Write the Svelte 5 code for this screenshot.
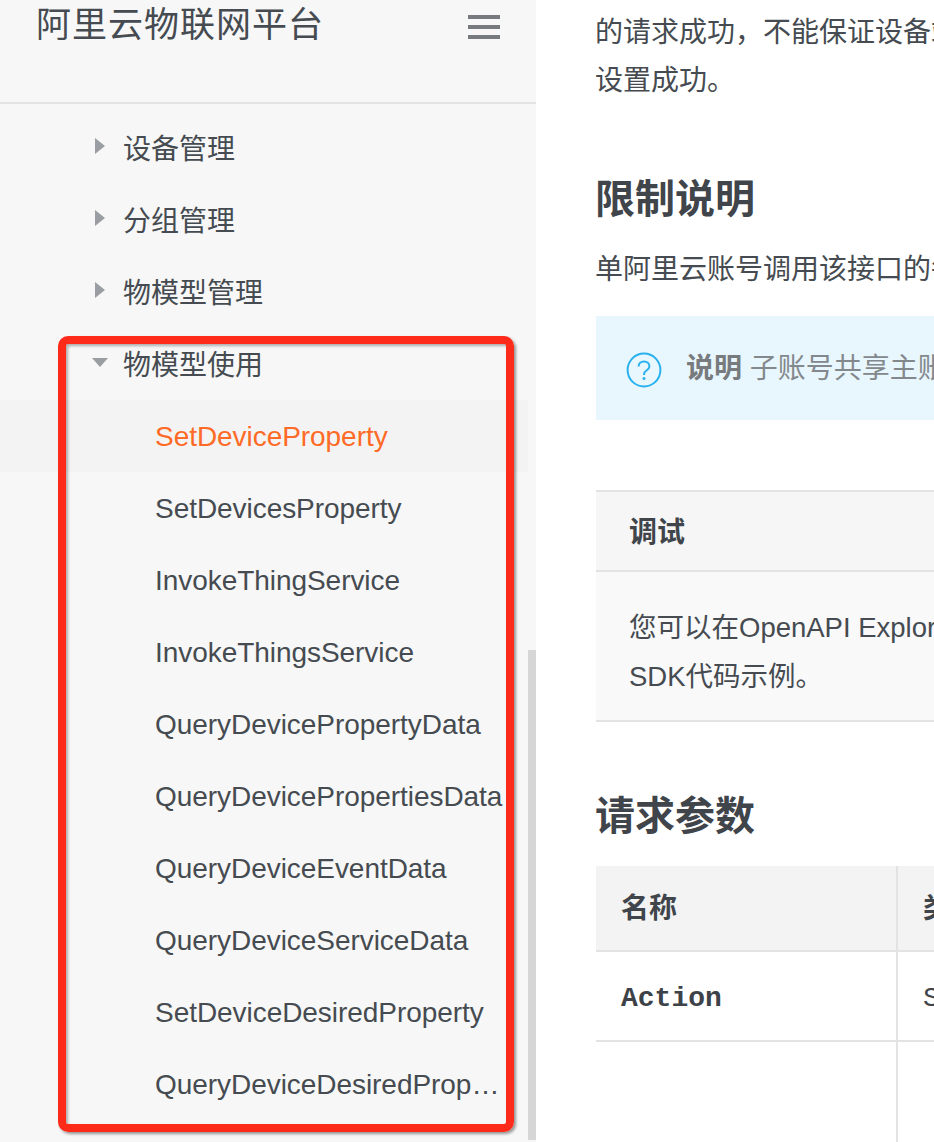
<script>
  const groups = ['设备管理', '分组管理', '物模型管理'];
  const apis = [
    'SetDeviceProperty', 'SetDevicesProperty', 'InvokeThingService', 'InvokeThingsService',
    'QueryDevicePropertyData', 'QueryDevicePropertiesData', 'QueryDeviceEventData',
    'QueryDeviceServiceData', 'SetDeviceDesiredProperty', 'QueryDeviceDesiredPropertyData'
  ];
</script>

<div class="page">
  <aside class="side">
    <header class="top">
      <h1>阿里云物联网平台</h1>
      <button class="burger" aria-label="菜单"><i></i><i></i><i></i></button>
    </header>
    <nav class="nav">
      {#each groups as g}
        <div class="row group"><span class="tri right"></span>{g}</div>
      {/each}
      <div class="row group"><span class="tri down"></span>物模型使用</div>
      {#each apis as a, i}
        <div class="row api" class:active={i === 0}><span class="label">{a}</span></div>
      {/each}
    </nav>
    <div class="scroll"></div>
    <div class="mark"></div>
  </aside>

  <main class="main">
    <p class="para first">的请求成功，不能保证设备端属性已设置成功。<br />设置成功。</p>
    <h2 class="h-limit">限制说明</h2>
    <p class="para one">单阿里云账号调用该接口的每秒请求数</p>
    <div class="note">
      <svg class="help" width="36" height="36" viewBox="0 0 36 36" aria-hidden="true">
        <circle cx="18" cy="18" r="16.4" fill="none" stroke="#29b1ee" stroke-width="2" />
        <path d="M12.6 14.4c0-3 2.4-5 5.4-5s5.4 2 5.4 4.8c0 2-1.1 3-2.7 4.1-1.6 1.1-2.7 2-2.7 4.1v.6" fill="none" stroke="#29b1ee" stroke-width="2" />
        <circle cx="18" cy="26.6" r="1.5" fill="#29b1ee" />
      </svg>
      <span class="note-text"><b>说明</b> 子账号共享主账号配额</span>
    </div>
    <section class="debug">
      <div class="debug-head">调试</div>
      <div class="debug-body">您可以在OpenAPI Explorer中直接运行该接口，免去您计算签名的困扰。<br />SDK代码示例。</div>
    </section>
    <h2 class="h-req">请求参数</h2>
    <div class="table">
      <div class="cell c1 head">名称</div>
      <div class="cell c2 head">类型</div>
      <div class="cell c1 r1"><code>Action</code></div>
      <div class="cell c2 r1">String</div>
      <div class="cell c1 r2"></div>
      <div class="cell c2 r2"></div>
    </div>
  </main>
</div>

<style>
  :global(body) {
    margin: 0;
    background: #fff;
  }
  .page {
    display: flex;
    width: 934px;
    height: 1142px;
    overflow: hidden;
    font-family: "Liberation Sans", "Noto Sans CJK SC", sans-serif;
    color: #3f454a;
  }
  .side {
    position: relative;
    flex: 0 0 536px;
    height: 1142px;
    background: #f7f7f7;
    overflow: hidden;
  }
  .top {
    display: flex;
    justify-content: space-between;
    height: 102px;
    padding: 0 36px;
    border-bottom: 2px solid #e3e3e3;
    width: 464px;
  }
  h1 {
    margin: 0;
    font-size: 35px;
    letter-spacing: 1px;
    font-weight: 400;
    line-height: 50px;
    color: #454b50;
  }
  .burger {
    display: flex;
    flex-direction: column;
    gap: 6px;
    width: 32px;
    height: 24px;
    padding: 0;
    margin-top: 15px;
    border: 0;
    background: none;
  }
  .burger i {
    display: block;
    height: 4px;
    background: #777b7f;
  }
  .nav {
    padding-top: 8px;
    width: 528px;
  }
  .row {
    display: flex;
    align-items: center;
    box-sizing: border-box;
    height: 72px;
    font-size: 28px;
    color: #454b50;
  }
  .group {
    position: relative;
    padding-left: 123px;
    padding-bottom: 3px;
  }
  .tri {
    position: absolute;
    width: 0;
    height: 0;
  }
  .tri.right {
    left: 95px;
    top: 26px;
    border-left: 10px solid #9a9ea2;
    border-top: 8px solid transparent;
    border-bottom: 8px solid transparent;
  }
  .tri.down {
    left: 92px;
    top: 30px;
    border-top: 9px solid #9a9ea2;
    border-left: 8px solid transparent;
    border-right: 8px solid transparent;
  }
  .api {
    padding-left: 155px;
    padding-top: 2px;
    width: 528px;
    letter-spacing: -0.05px;
  }
  .api .label {
    display: block;
    width: 348px;
    overflow: hidden;
    white-space: nowrap;
    text-overflow: ellipsis;
  }
  .api.active {
    background: #f3f3f3;
    color: #ff6a26;
  }
  .scroll {
    position: absolute;
    left: 528px;
    top: 650px;
    width: 8px;
    height: 490px;
    background: #d6d6d6;
  }
  .mark {
    position: absolute;
    left: 58px;
    top: 336px;
    width: 456px;
    height: 796px;
    box-sizing: border-box;
    border: 8px solid #ff2b1a;
    border-radius: 10px;
    box-shadow: 2px 2px 3px rgba(0, 0, 0, 0.4), inset 2px 2px 3px rgba(0, 0, 0, 0.3);
  }
  .main {
    flex: 1;
    min-width: 0;
    padding-left: 60px;
    overflow: hidden;
    background: #fff;
  }
  .para {
    margin: 0 0 0 -1px;
    font-size: 28px;
    line-height: 48px;
    white-space: nowrap;
    color: #454b50;
  }
  .para.first {
    margin-top: 9px;
  }
  h2 {
    margin: 0 0 0 -1px;
    font-size: 40px;
    font-weight: 700;
    line-height: 50px;
    color: #3f454a;
  }
  .h-limit {
    margin-top: 69px;
  }
  .para.one {
    margin-top: 22px;
  }
  .note {
    display: flex;
    align-items: center;
    gap: 24px;
    height: 104px;
    margin-top: 22px;
    padding-left: 30px;
    background: #e8f6fe;
    white-space: nowrap;
  }
  .help {
    flex: none;
    margin-top: 4px;
  }
  .note-text {
    font-size: 28px;
    color: #83888c;
    padding-bottom: 4px;
  }
  .note-text b {
    font-weight: 700;
    color: #777b7e;
  }
  .debug {
    margin-top: 70px;
    border-top: 2px solid #e3e3e3;
    border-bottom: 2px solid #e3e3e3;
    white-space: nowrap;
  }
  .debug-head {
    height: 78px;
    line-height: 82px;
    padding-left: 33px;
    font-size: 28px;
    font-weight: 700;
    background: #f6f6f6;
    border-bottom: 2px solid #e3e3e3;
  }
  .debug-body {
    height: 148px;
    box-sizing: border-box;
    padding: 31px 0 0 33px;
    font-size: 27.5px;
    line-height: 49px;
    background: #f9f9f9;
    color: #454b50;
  }
  .h-req {
    margin-top: 69px;
  }
  .table {
    display: grid;
    grid-template-columns: 302px 200px;
    grid-template-rows: 86px 90px 200px;
    margin-top: 25px;
    width: 502px;
    white-space: nowrap;
  }
  .cell {
    display: flex;
    align-items: center;
    box-sizing: border-box;
    padding-left: 25px;
    font-size: 28px;
    border-bottom: 2px solid #e3e3e3;
  }
  .c1 {
    border-right: 2px solid #e3e3e3;
  }
  .head {
    background: #f3f3f3;
    font-weight: 700;
    padding-bottom: 5px;
  }
  .r1 {
    padding-top: 5px;
  }
  .r1 code {
    font-family: "Liberation Mono", monospace;
    font-size: 28px;
    font-weight: 700;
    color: #3c4247;
  }
  .r1.c2 {
    font-family: "Liberation Mono", monospace;
  }
  .r2 {
    border-bottom: 0;
  }
</style>
